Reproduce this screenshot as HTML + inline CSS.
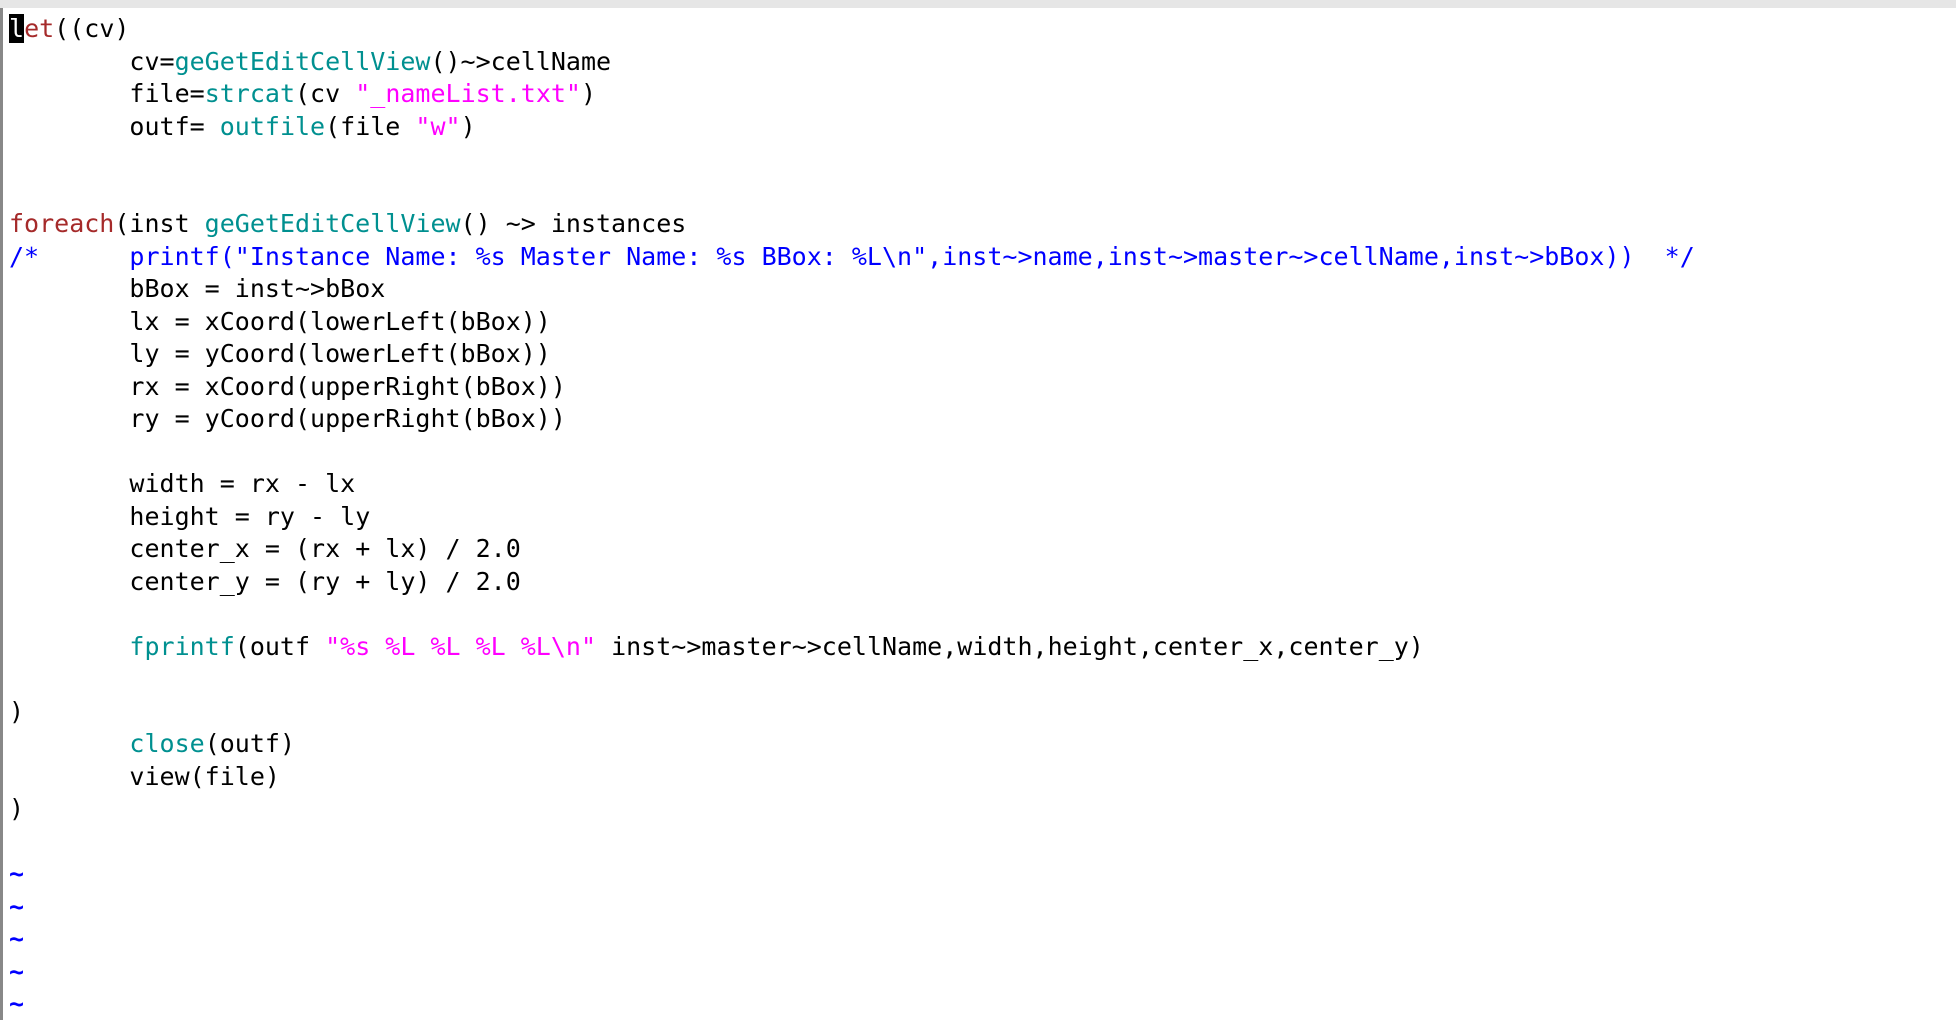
<!DOCTYPE html>
<html><head><style>
html,body{margin:0;padding:0;background:#fff;width:1956px;height:1020px;overflow:hidden}
.top{position:absolute;left:0;top:0;width:1956px;height:8px;background:#e6e6e6}
.lb{position:absolute;left:0;top:8px;width:3px;height:1012px;background:#888}
pre{position:absolute;left:9px;top:13px;margin:0;font-family:"DejaVu Sans Mono","Liberation Mono",monospace;font-size:25px;line-height:32.5px;tab-size:8;-moz-tab-size:8;color:#000;white-space:pre}
.k{color:#a52a2a}.f{color:#009090}.s{color:#ff00ff}.c{color:#0000ff}.t{color:#0000ff;font-weight:bold}
.cur{background:#000;color:#fff}
</style></head><body>
<div class="top"></div><div class="lb"></div>
<pre><span class="cur">l</span><span class="k">et</span>((cv)
	cv=<span class="f">geGetEditCellView</span>()~&gt;cellName
	file=<span class="f">strcat</span>(cv <span class="s">"_nameList.txt"</span>)
	outf= <span class="f">outfile</span>(file <span class="s">"w"</span>)


<span class="k">foreach</span>(inst <span class="f">geGetEditCellView</span>() ~&gt; instances
<span class="c">/*	printf("Instance Name: %s Master Name: %s BBox: %L\n",inst~&gt;name,inst~&gt;master~&gt;cellName,inst~&gt;bBox))  */</span>
	bBox = inst~&gt;bBox
	lx = xCoord(lowerLeft(bBox))
	ly = yCoord(lowerLeft(bBox))
	rx = xCoord(upperRight(bBox))
	ry = yCoord(upperRight(bBox))

	width = rx - lx
	height = ry - ly
	center_x = (rx + lx) / 2.0
	center_y = (ry + ly) / 2.0

	<span class="f">fprintf</span>(outf <span class="s">"%s %L %L %L %L\n"</span> inst~&gt;master~&gt;cellName,width,height,center_x,center_y)

)
	<span class="f">close</span>(outf)
	view(file)
)

<span class="t">~</span>
<span class="t">~</span>
<span class="t">~</span>
<span class="t">~</span>
<span class="t">~</span></pre>
</body></html>
